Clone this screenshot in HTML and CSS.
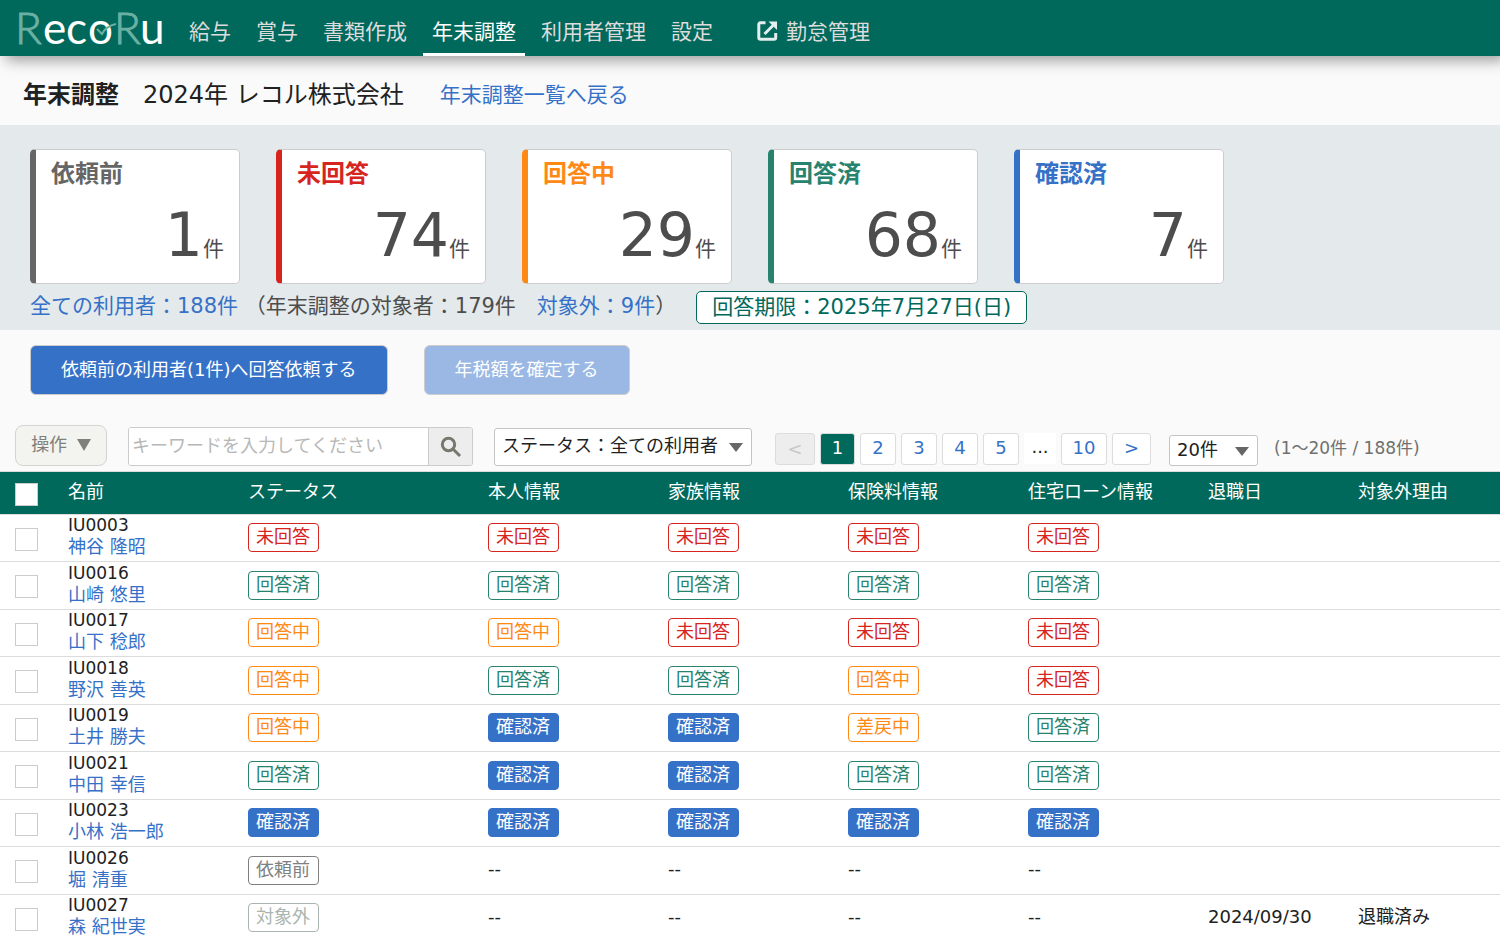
FILE: index.html
```html
<!DOCTYPE html>
<html lang="ja">
<head>
<meta charset="utf-8">
<title>年末調整 - RecoRu</title>
<link rel="stylesheet" href="styles.css">
</head>
<body>
<header class="topbar">
  <a class="logo" href="#" aria-label="RecoRu">
    <svg width="150" height="56" viewBox="0 0 150 56">
      <g class="logo-word">
        <text class="logo-cap" x="-3" y="44">R</text>
        <text x="25" y="44">e</text>
        <text x="48" y="44">c</text>
        <text x="70" y="44">o</text>
        <text class="logo-cap" x="96" y="44">R</text>
        <text x="122" y="44">u</text>
      </g>
      <path class="logo-check" d="M79 29l5 5Q88 26 98 24"/>
    </svg>
  </a>
  <nav class="nav">
    <a href="#">給与</a>
    <a href="#">賞与</a>
    <a href="#">書類作成</a>
    <a class="active" href="#">年末調整</a>
    <a href="#">利用者管理</a>
    <a href="#">設定</a>
    <a class="external" href="#"><svg width="21" height="20" viewBox="0 0 21 20"><path d="M8.500 1.800H3.500Q1.800 1.800 1.800 3.500V16.500Q1.800 18.200 3.500 18.200H17Q18.700 18.200 18.700 16.500V12M7.500 13L17 3.500"/><path class="solid" d="M11.500 0.500H20V9z"/></svg>勤怠管理</a>
  </nav>
</header>
<main>
  <div class="heading">
    <h1>年末調整</h1>
    <span class="company">2024年 レコル株式会社</span>
    <a href="#">年末調整一覧へ戻る</a>
  </div>
  <section class="overview">
    <div class="cards">
      <div class="card before"><h2>依頼前</h2><p><b>1</b>件</p></div>
      <div class="card unanswered"><h2>未回答</h2><p><b>74</b>件</p></div>
      <div class="card answering"><h2>回答中</h2><p><b>29</b>件</p></div>
      <div class="card answered"><h2>回答済</h2><p><b>68</b>件</p></div>
      <div class="card confirmed"><h2>確認済</h2><p><b>7</b>件</p></div>
    </div>
    <div class="totals">
      <p><a href="#">全ての利用者：188件</a> （年末調整の対象者：179件　<a href="#">対象外：9件</a>）</p>
      <span class="deadline">回答期限：2025年7月27日(日)</span>
    </div>
  </section>
  <div class="actions">
    <button class="primary" type="button">依頼前の利用者(1件)へ回答依頼する</button>
    <button class="primary" type="button" disabled>年税額を確定する</button>
  </div>
  <div class="toolbar">
    <button class="operate" type="button">操作 <span class="triangle"></span></button>
    <form class="search">
      <input type="text" aria-label="キーワード" placeholder="キーワードを入力してください">
      <button type="button" aria-label="検索"><svg width="22" height="22" viewBox="0 0 22 22"><circle cx="8.500" cy="8.500" r="6.200"/><path d="M13 13l7 7"/></svg></button>
    </form>
    <div class="select status-select"><select aria-label="ステータス"><option>ステータス：全ての利用者</option></select></div>
    <div class="pager">
      <button class="prev" type="button" disabled>&lt;</button>
      <a class="current" href="#">1</a>
      <a href="#">2</a>
      <a href="#">3</a>
      <a href="#">4</a>
      <a href="#">5</a>
      <span class="dots">...</span>
      <a class="wide" href="#">10</a>
      <a class="next" href="#">&gt;</a>
    </div>
    <div class="select size-select"><select aria-label="表示件数"><option>20件</option></select></div>
    <span class="range">(1～20件 / 188件)</span>
  </div>
  <table class="users">
    <thead>
      <tr><th class="check"><input type="checkbox" aria-label="全て選択"></th><th class="name">名前</th><th class="status">ステータス</th><th class="info">本人情報</th><th class="info">家族情報</th><th class="info">保険料情報</th><th class="info">住宅ローン情報</th><th class="leave">退職日</th><th class="reason">対象外理由</th></tr>
    </thead>
    <tbody>
      <tr><td><input type="checkbox" aria-label="IU0003"></td><td><span class="code">IU0003</span><a href="#">神谷 隆昭</a></td><td><span class="tag red">未回答</span></td><td><span class="tag red">未回答</span></td><td><span class="tag red">未回答</span></td><td><span class="tag red">未回答</span></td><td><span class="tag red">未回答</span></td><td></td><td></td></tr>
      <tr><td><input type="checkbox" aria-label="IU0016"></td><td><span class="code">IU0016</span><a href="#">山崎 悠里</a></td><td><span class="tag green">回答済</span></td><td><span class="tag green">回答済</span></td><td><span class="tag green">回答済</span></td><td><span class="tag green">回答済</span></td><td><span class="tag green">回答済</span></td><td></td><td></td></tr>
      <tr><td><input type="checkbox" aria-label="IU0017"></td><td><span class="code">IU0017</span><a href="#">山下 稔郎</a></td><td><span class="tag orange">回答中</span></td><td><span class="tag orange">回答中</span></td><td><span class="tag red">未回答</span></td><td><span class="tag red">未回答</span></td><td><span class="tag red">未回答</span></td><td></td><td></td></tr>
      <tr><td><input type="checkbox" aria-label="IU0018"></td><td><span class="code">IU0018</span><a href="#">野沢 善英</a></td><td><span class="tag orange">回答中</span></td><td><span class="tag green">回答済</span></td><td><span class="tag green">回答済</span></td><td><span class="tag orange">回答中</span></td><td><span class="tag red">未回答</span></td><td></td><td></td></tr>
      <tr><td><input type="checkbox" aria-label="IU0019"></td><td><span class="code">IU0019</span><a href="#">土井 勝夫</a></td><td><span class="tag orange">回答中</span></td><td><span class="tag blue">確認済</span></td><td><span class="tag blue">確認済</span></td><td><span class="tag orange">差戻中</span></td><td><span class="tag green">回答済</span></td><td></td><td></td></tr>
      <tr><td><input type="checkbox" aria-label="IU0021"></td><td><span class="code">IU0021</span><a href="#">中田 幸信</a></td><td><span class="tag green">回答済</span></td><td><span class="tag blue">確認済</span></td><td><span class="tag blue">確認済</span></td><td><span class="tag green">回答済</span></td><td><span class="tag green">回答済</span></td><td></td><td></td></tr>
      <tr><td><input type="checkbox" aria-label="IU0023"></td><td><span class="code">IU0023</span><a href="#">小林 浩一郎</a></td><td><span class="tag blue">確認済</span></td><td><span class="tag blue">確認済</span></td><td><span class="tag blue">確認済</span></td><td><span class="tag blue">確認済</span></td><td><span class="tag blue">確認済</span></td><td></td><td></td></tr>
      <tr><td><input type="checkbox" aria-label="IU0026"></td><td><span class="code">IU0026</span><a href="#">堀 清重</a></td><td><span class="tag gray">依頼前</span></td><td>--</td><td>--</td><td>--</td><td>--</td><td></td><td></td></tr>
      <tr><td><input type="checkbox" aria-label="IU0027"></td><td><span class="code">IU0027</span><a href="#">森 紀世実</a></td><td><span class="tag pale">対象外</span></td><td>--</td><td>--</td><td>--</td><td>--</td><td>2024/09/30</td><td>退職済み</td></tr>
    </tbody>
  </table>
</main>
</body>
</html>
```
FILE: styles.css
```css
* { box-sizing: border-box; }
body {
  margin: 0;
  background: #fafafa;
  color: #212121;
  font: 18px/24px "DejaVu Sans", "Noto Sans CJK JP", sans-serif;
}
h1, h2, p { margin: 0; }
a { color: #3671c8; text-decoration: none; }
button, input, select { font: inherit; margin: 0; }

.topbar {
  position: relative;
  display: flex;
  height: 56px;
  padding-left: 18px;
  background: #00695c;
  box-shadow: 6px 4px 14px rgba(0, 0, 0, 0.4);
}
.logo { display: block; margin-right: 12px; height: 56px; }
.logo svg { display: block; overflow: visible; }
.logo-word { font-family: Lato, sans-serif; font-weight: 400; font-size: 44px; fill: #fff; }
.logo-cap { font-weight: 300; fill: #6bb0a3; stroke: #6bb0a3; stroke-width: 1; }
.logo-check { fill: none; stroke: #6bb0a3; stroke-width: 2; }
.nav { display: flex; gap: 7px; font-size: 21px; line-height: 64px; }
.nav a { padding: 0 9px; height: 56px; color: #dcdcdc; white-space: nowrap; }
.nav .active { color: #fff; border-bottom: 3px solid #fff; }
.nav .external { display: flex; gap: 8px; margin-left: 19px; }
.external svg { margin-top: 21px; fill: none; stroke: #e4eeee; stroke-width: 3; }
.external .solid { fill: #e4eeee; stroke: none; }

.heading { display: flex; align-items: center; height: 69px; padding: 8px 23px 0; font-size: 24px; line-height: 36px; }
.heading h1 { font-size: 24px; margin-right: 24px; }
.heading a { margin-left: 36px; font-size: 21px; }

.overview { background: #e4e9ec; padding: 24px 30px 6px; }
.cards { display: flex; gap: 36px; }
.card {
  width: 210px;
  height: 135px;
  padding: 9px 15px 0;
  background: #fff;
  border: 1px solid #ccc;
  border-left: 6px solid;
  border-radius: 5px;
}
.card h2 { font-size: 24px; line-height: 30px; }
.card p { text-align: right; color: #4d4d4d; font-size: 21px; line-height: 80px; margin-top: 6px; }
.card b { font-size: 60px; font-weight: 400; }
.before { border-left-color: #666; }
.before h2 { color: #666; }
.unanswered { border-left-color: #d6241f; }
.unanswered h2 { color: #d6241f; }
.answering { border-left-color: #ff8915; }
.answering h2 { color: #ff8915; }
.answered { border-left-color: #28836e; }
.answered h2 { color: #28836e; }
.confirmed { border-left-color: #3671c8; }
.confirmed h2 { color: #3671c8; }
.totals { display: flex; gap: 20px; margin-top: 7px; font-size: 21px; line-height: 31px; color: #4d4d4d; white-space: nowrap; }
.deadline { padding: 0 15px; border: 1px solid #00695c; border-radius: 5px; background: #fff; color: #00695c; }

.actions { display: flex; gap: 36px; padding: 15px 30px 0; }
.primary { height: 50px; padding: 0 30px; border: 1px solid #ccc; border-radius: 6px; background: #3671c8; color: #fff; }
.primary:disabled { background: #9bb8e4; }

.toolbar { display: flex; align-items: flex-end; height: 76px; padding: 0 15px 5px; white-space: nowrap; }
.operate { width: 92px; height: 41px; margin-right: 21px; padding: 0 0 2px; border: 1px solid #d4d4d0; border-radius: 8px; background: #f3f3ef; color: #80807a; }
.triangle { display: inline-block; margin-left: 4px; border: solid transparent; border-width: 12px 7px 0; border-top-color: #80807a; }
.search { display: flex; width: 345px; height: 39px; margin-right: 21px; border: 1px solid #ccc; border-radius: 3px; overflow: hidden; }
.search input { flex: 1; min-width: 0; padding: 0 3px 2px; border: 0; background: #fff; }
.search input::placeholder { color: #b8b8b8; opacity: 1; }
.search button { width: 44px; padding: 0; border: 0; border-left: 1px solid #ccc; background: #ededed; }
.search svg { display: block; margin: auto; fill: none; stroke: #78786e; stroke-width: 3; }
.select { position: relative; }
.select select { display: block; width: 100%; height: 100%; padding: 0 7px 2px; border: 1px solid #c4c4c4; border-radius: 3px; background: #fff; color: #212121; appearance: none; }
.select::after { content: ""; position: absolute; top: 50%; right: 9px; margin-top: -4px; border: solid transparent; border-width: 9px 7px 0; border-top-color: #666; pointer-events: none; }
.status-select { width: 258px; height: 38px; margin-right: 23px; }
.size-select { width: 89px; height: 31px; margin: 0 16px 0 18px; }
.pager { display: flex; gap: 5px; margin-bottom: 1px; line-height: 28px; text-align: center; }
.pager a { width: 36px; height: 32px; border: 1px solid #dcdcdc; border-radius: 3px; background: #fff; }
.pager .prev { width: 40px; padding: 0; border: 1px solid #dcdcdc; border-radius: 3px; background: #ededed; color: #c8c8c8; }
.pager .current { width: 35px; background: #00695c; color: #fff; }
.pager .dots { width: 32px; height: 31px; background: #fff; }
.pager .wide { width: 46px; }
.pager .next { width: 39px; }
.range { color: #707070; font-size: 17px; line-height: 36px; }

.users { width: 100%; table-layout: fixed; border-collapse: collapse; background: #fff; }
.users th { height: 43px; padding: 0 0 3px 8px; background: #00695c; border-top: 1px solid #dcdcdc; color: #fff; text-align: left; font-weight: 400; white-space: nowrap; }
.users td { height: 48px; padding: 0 0 3px 8px; border-top: 1px solid #dcdcdc; }
.users tr:nth-child(odd) td { height: 47px; }
.users .check { width: 4%; }
.users .name, .users .info { width: 12%; }
.users .status { width: 16%; }
.users .leave, .users .reason { width: 10%; }
.users th:first-child, .users td:first-child { padding: 2px 0 0 15px; }
.users td:nth-child(2) { padding: 0 0 4px 8px; line-height: 21px; }
.users input { display: block; width: 23px; height: 23px; appearance: none; border: 1px solid #ccc; background: #fff; }
.code { display: block; font-size: 17px; }
.tag { display: inline-block; margin-top: 2px; padding: 0 8px 2px 7px; border: 1px solid; border-radius: 4px; line-height: 25px; vertical-align: middle; }
.red { color: #d6241f; }
.green { color: #28836e; }
.orange { color: #ff8915; }
.gray { color: #808080; }
.pale { color: #aab4b0; }
.blue { color: #fff; background: #3671c8; border-color: #3671c8; }
```
